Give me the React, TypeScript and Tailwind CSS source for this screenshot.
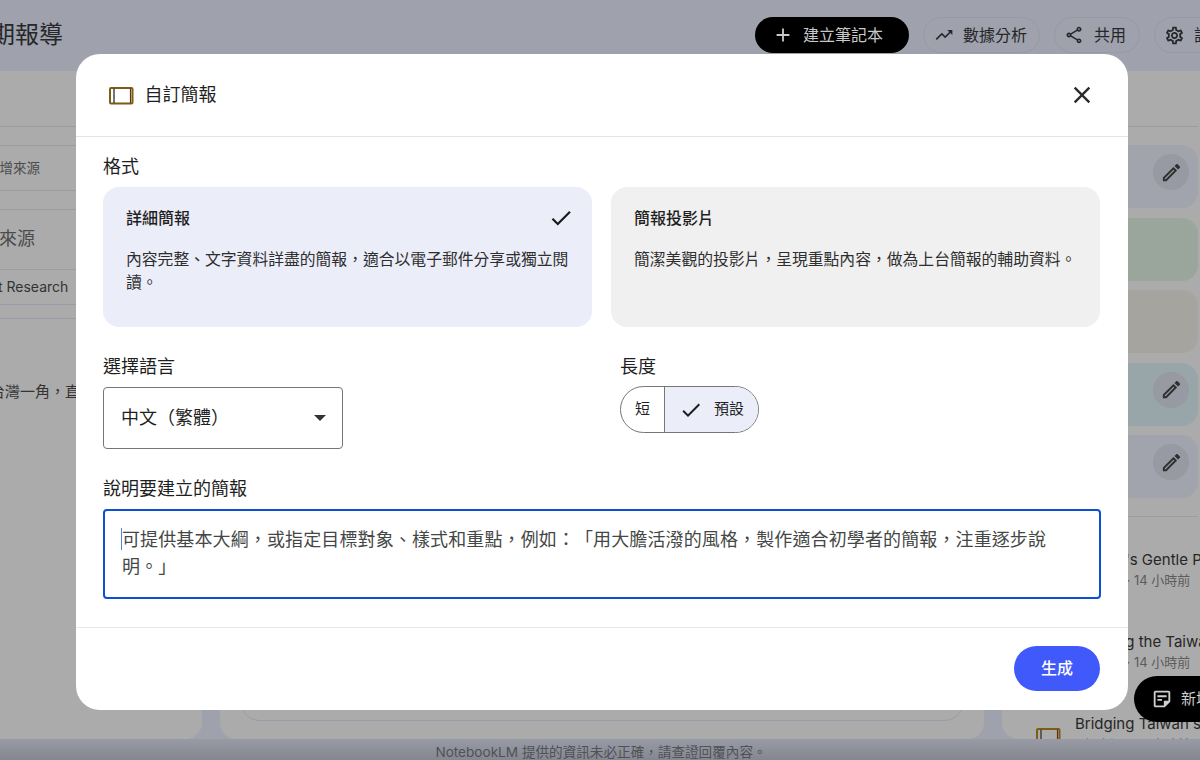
import React from "react";
import {
  MdAdd,
  MdCheck,
  MdClose,
  MdOutlineEdit,
  MdOutlineSettings,
  MdOutlineShare,
  MdOutlineStickyNote2,
  MdTrendingUp,
} from "react-icons/md";

const font = "font-['Inter','Noto_Sans_CJK_TC','Noto_Sans_CJK_JP',sans-serif]";

function SlideIcon({ className }: { className?: string }) {
  return (
    <svg className={className} width="26" height="19" viewBox="0 0 26 19" fill="none">
      <rect x="2" y="2" width="22.5" height="15.5" rx="1" stroke="#7b5d14" strokeWidth="2" />
      <path d="M6 2.5v14.5" stroke="#3d3a2e" strokeWidth="1.4" />
      <path d="M22.5 2.5v14.5" stroke="#6b2b14" strokeWidth="1.2" />
    </svg>
  );
}

function HeaderPill({ icon, label, extra }: { icon: React.ReactNode; label: string; extra?: string }) {
  return (
    <div className={`flex h-9 shrink-0 items-center rounded-full border border-[#979aa4] text-base whitespace-nowrap text-[#26272a] ${extra ?? ""}`}>
      {icon}
      <span>{label}</span>
    </div>
  );
}

function RightCard({ color, pencil }: { color: string; pencil?: boolean }) {
  return (
    <div className={`flex h-[63px] items-start justify-end rounded-2xl pt-[9px] pr-[9px] ${color}`}>
      {pencil && (
        <div className="flex h-9 w-9 items-center justify-center rounded-full bg-[#979aa2] text-[#2f2f2f]">
          <MdOutlineEdit size={23} />
        </div>
      )}
    </div>
  );
}

function RecentRow({ title, sub }: { title: string; sub: string }) {
  return (
    <div className="flex h-[82px] shrink-0 items-start gap-[14px] pl-[33px]">
      <SlideIcon className="mt-[14px] shrink-0" />
      <div className="min-w-0 whitespace-nowrap">
        <div className="text-[15px] leading-[22px] text-[#262626]">{title}</div>
        <div className="text-[13px] leading-[18px] text-[#5c5c5c]">{sub}</div>
      </div>
    </div>
  );
}

export default function App() {
  return (
    <div className={`relative flex h-[760px] w-[1200px] flex-col overflow-hidden bg-[#9fa2ac] [text-spacing-trim:space-all] ${font}`}>
      {/* page header */}
      <header className="flex h-[71px] shrink-0 items-center justify-between pb-px">
        <div className="-ml-[9px] text-2xl text-[#26272a]">期報導</div>
        <div className="-mr-[60px] flex items-center gap-[14px]">
          <div className="flex h-9 w-[154px] items-center gap-[9px] rounded-full bg-black pl-[17px] text-base text-[#c9c9c9]">
            <MdAdd size={22} />
            <span>建立筆記本</span>
          </div>
          <HeaderPill icon={<MdTrendingUp size={20} />} label="數據分析" extra="w-[117px] gap-[9px] pl-[10px]" />
          <HeaderPill icon={<MdOutlineShare size={20} />} label="共用" extra="w-[86px] gap-[10px] pl-[9px]" />
          <HeaderPill icon={<MdOutlineSettings size={21} />} label="設定" extra="w-[106px] gap-[9px] pl-[9px]" />
        </div>
      </header>

      {/* panels */}
      <main className="flex min-h-0 flex-1 gap-[18px]">
        <section className="flex w-[202px] shrink-0 flex-col overflow-hidden rounded-br-2xl bg-[#ababab] text-[#4b4b4b]">
          <div className="h-[56px] shrink-0 border-b border-[#9b9ba3]" />
          <div className="mt-[18px] flex h-[46px] shrink-0 items-center overflow-hidden border-y border-[#9b9ba3] text-[13.5px] whitespace-nowrap">
            <span className="-ml-[14px]">新增來源</span>
          </div>
          <div className="mt-[18px] flex h-[61px] shrink-0 items-center overflow-hidden border-y border-[#9b9ba3] pb-[2px] text-lg whitespace-nowrap">
            <span className="-ml-[1px]">來源</span>
          </div>
          <div className="flex h-[35px] shrink-0 items-center overflow-hidden border-b border-[#9b9ba3] pb-px text-sm whitespace-nowrap text-[#333]">
            <span className="-ml-[2px]">t Research</span>
          </div>
          <div className="h-[14px] shrink-0 border-b border-[#9b9ba3]" />
          <div className="mt-[62px] overflow-hidden text-[15px] whitespace-nowrap text-[#333]">
            <span className="-ml-[10px] inline-block">台灣一角，直</span>
          </div>
        </section>

        <section className="flex w-[764px] shrink-0 flex-col justify-end rounded-b-2xl bg-[#ababab] px-5 pb-[18px]">
          <div className="h-[60px] rounded-b-[20px] border border-[#9a9ca8]" />
        </section>

        <section className="flex min-w-0 flex-1 flex-col overflow-hidden rounded-bl-2xl bg-[#ababab] pr-[2px]">
          <div className="h-[56px] shrink-0 border-b border-[#9b9ba3]" />
          <div className="mt-[18px] flex shrink-0 flex-col gap-[9.5px]">
            <RightCard color="bg-[#a1a4ad]" pencil />
            <RightCard color="bg-[#9aa69c]" />
            <RightCard color="bg-[#a5a49e]" />
            <RightCard color="bg-[#98a6aa]" pencil />
            <RightCard color="bg-[#a1a4ad]" pencil />
          </div>
          <div className="mt-[18px] h-px shrink-0 bg-[#9b9ba3]" />
          <div className="mt-[32px] flex flex-col">
            <RecentRow title="Taiwan's Gentle Pace" sub="1 個來源 · 14 小時前" />
            <RecentRow title="Bridging the Taiwan" sub="1 個來源 · 14 小時前" />
            <RecentRow title="Bridging Taiwan s" sub="1 個來源 · 14 小時前" />
          </div>
        </section>
      </main>

      {/* disclaimer */}
      <footer className="flex h-[21px] shrink-0 items-center justify-center bg-gradient-to-b from-[#989ba5] to-[#85878f] pt-[5px] pl-[2px] text-[13.6px] text-[#4f5157]">
        NotebookLM 提供的資訊未必正確，請查證回覆內容。
      </footer>

      {/* floating note button */}
      <div className="absolute top-[676px] left-[1134px] flex h-[46px] w-[120px] items-center gap-[8px] rounded-full bg-black pl-[17px] text-[15px] text-[#cfcfcf]">
        <MdOutlineStickyNote2 size={22} />
        <span className="whitespace-nowrap">新增記事</span>
      </div>

      {/* dialog */}
      <div className="absolute top-[54px] left-[76px] flex h-[656px] w-[1052px] flex-col rounded-[24px] bg-white text-[#1f1f1f]">
        <div className="flex h-[83px] shrink-0 items-center justify-between border-b border-[#e3e3ee] pr-[32px] pl-[32px]">
          <div className="flex items-center gap-[10.5px]">
            <SlideIcon />
            <span className="text-lg">自訂簡報</span>
          </div>
          <MdClose size={28} className="text-[#2a2a2a]" />
        </div>

        <div className="flex flex-1 flex-col px-[27px] pt-[17px]">
          <div className="text-lg leading-[26px]">格式</div>
          <div className="mt-[7px] grid h-[140px] grid-cols-[489px_489px] gap-[19px]">
            <div className="rounded-2xl bg-[#ebedf9] px-[23px] pt-[19px]">
              <div className="flex h-6 items-center justify-between">
                <span className="text-base leading-6 font-medium">詳細簡報</span>
                <MdCheck size={26} className="-mr-[5px] text-[#1a1a1a]" />
              </div>
              <p className="mt-[18px] text-[15.8px] leading-[23px] text-[#2e2e2e]">
                內容完整、文字資料詳盡的簡報，適合以電子郵件分享或獨立閱讀。
              </p>
            </div>
            <div className="rounded-2xl bg-[#f0f0f0] px-[23px] pt-[19px]">
              <div className="text-base leading-6 font-medium">簡報投影片</div>
              <p className="mt-[18px] text-[15.8px] leading-[23px] text-[#2e2e2e]">
                簡潔美觀的投影片，呈現重點內容，做為上台簡報的輔助資料。
              </p>
            </div>
          </div>

          <div className="mt-[26px] flex">
            <div className="w-[517px]">
              <div className="mt-px text-lg leading-[26px]">選擇語言</div>
              <div className="mt-[7px] flex h-[62px] w-[240px] items-center justify-between rounded border border-[#767676] pr-[16px] pl-[17px] text-lg">
                <span>中文（繁體）</span>
                <div className="h-0 w-0 border-x-[6px] border-t-[6px] border-x-transparent border-t-[#333]" />
              </div>
            </div>
            <div>
              <div className="mt-px text-lg leading-[26px]">長度</div>
              <div className="mt-[6px] flex h-[47px] w-[139px] overflow-hidden rounded-full border border-[#767676] text-[15px]">
                <div className="flex w-[44px] items-center justify-center border-r border-[#767676]">短</div>
                <div className="flex flex-1 items-center justify-center gap-[11px] bg-[#ebedf9]">
                  <MdCheck size={24} />
                  <span>預設</span>
                </div>
              </div>
            </div>
          </div>

          <div className="mt-[27px] text-lg leading-[26px]">說明要建立的簡報</div>
          <div className="relative mt-[7px] h-[90px] rounded border-2 border-[#0b4fd6] pt-[15px] pr-[41px] pl-[17px] text-lg leading-[27px] tracking-[0.12px] text-[#444746]">
            <span className="absolute top-[17px] left-[16px] h-[22px] w-px bg-[#5b7fd6]" />
            可提供基本大綱，或指定目標對象、樣式和重點，例如：「用大膽活潑的風格，製作適合初學者的簡報，注重逐步說明。」
          </div>
        </div>

        <div className="flex h-[83px] shrink-0 items-center justify-end border-t border-[#e8e8ef] pr-[28px] pb-[2px]">
          <div className="flex h-[45px] w-[86px] items-center justify-center rounded-full bg-[#4059fb] text-base font-medium text-white">
            生成
          </div>
        </div>
      </div>
    </div>
  );
}
